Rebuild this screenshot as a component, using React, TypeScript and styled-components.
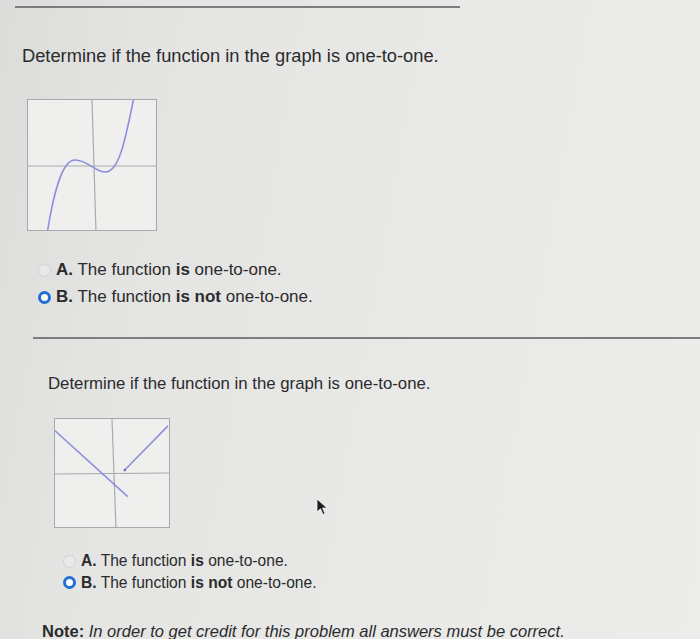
import React from 'react';
import styled, { createGlobalStyle } from 'styled-components';

const GlobalStyle = createGlobalStyle`
    html, body {
        margin: 0;
        padding: 0;
        width: 700px;
        height: 639px;
        overflow: hidden;
    }
    body {
        font-family: "Liberation Sans", Arial, sans-serif;
        color: #2b2b2d;
    }
`;

const Page = styled.div`
    position: relative;
    width: 700px;
    height: 639px;
    overflow: hidden;
    background: linear-gradient(100deg, #dcdcdb 0%, #e4e4e2 20%, #e9e9e7 60%, #ececea 100%);
    display: flex;
    flex-direction: column;
`;

const Rule = styled.div<{ $left: number; $width?: string; $top: number }>`
    margin-top: ${({ $top }) => $top}px;
    margin-left: ${({ $left }) => $left}px;
    width: ${({ $width }) => $width || 'auto'};
    height: 2px;
    background: #7d7d7f;
    flex-shrink: 0;
`;

const Section = styled.section<{ $indent: number; $top: number }>`
    display: flex;
    flex-direction: column;
    padding-left: ${({ $indent }) => $indent}px;
    margin-top: ${({ $top }) => $top}px;
`;

const Prompt = styled.p<{ $size: number }>`
    margin: 0;
    font-size: ${({ $size }) => $size}px;
    line-height: 1.2;
    color: #2b2b2d;
`;

const GraphBox = styled.div<{ $w: number; $h: number; $left: number; $top: number }>`
    margin-left: ${({ $left }) => $left}px;
    margin-top: ${({ $top }) => $top}px;
    width: ${({ $w }) => $w}px;
    height: ${({ $h }) => $h}px;
    background: #efefee;
    border: 1.5px solid #a9a9ab;
    box-sizing: border-box;
    svg {
        display: block;
        width: 100%;
        height: 100%;
    }
`;

const Options = styled.div<{ $left: number; $top: number; $gap: number }>`
    display: flex;
    flex-direction: column;
    gap: ${({ $gap }) => $gap}px;
    margin-left: ${({ $left }) => $left}px;
    margin-top: ${({ $top }) => $top}px;
`;

const Option = styled.label<{ $size: number }>`
    display: flex;
    align-items: center;
    gap: 5px;
    font-size: ${({ $size }) => $size}px;
    line-height: 1.2;
    color: #2b2b2d;
    b {
        font-weight: 700;
    }
`;

const Radio = styled.span<{ $checked?: boolean }>`
    width: 13px;
    height: 13px;
    border-radius: 50%;
    box-sizing: border-box;
    flex-shrink: 0;
    background: ${({ $checked }) => ($checked ? '#ffffff' : '#e8e8e8')};
    border: ${({ $checked }) => ($checked ? '3.5px solid #1f6fd6' : '1px solid #d2d2d2')};
`;

const Note = styled.p`
    margin: 0;
    margin-left: 42px;
    margin-top: 30px;
    font-size: 16.5px;
    line-height: 1.2;
    white-space: nowrap;
    color: #2b2b2d;
    i {
        font-style: italic;
    }
`;

const Cursor = styled.svg`
    position: absolute;
    left: 316px;
    top: 498px;
    width: 14px;
    height: 18px;
`;

const GraphOne = () => (
    <GraphBox $w={130} $h={132} $left={5} $top={32}>
        <svg viewBox="0 0 130 132">
            <line x1="65" y1="0" x2="69" y2="132" stroke="#a9a9ab" strokeWidth="1.2" />
            <line x1="0" y1="67" x2="130" y2="67" stroke="#a9a9ab" strokeWidth="1.2" />
            <path
                d="M20 132 C 26 96, 34 62, 47 61 C 60 60, 70 75, 80 73 C 92 71, 98 45, 107 0"
                fill="none"
                stroke="#8b8fdc"
                strokeWidth="1.6"
            />
        </svg>
    </GraphBox>
);

const GraphTwo = () => (
    <GraphBox $w={116} $h={110} $left={6} $top={24}>
        <svg viewBox="0 0 116 110">
            <line x1="58" y1="0" x2="62" y2="110" stroke="#a9a9ab" strokeWidth="1.2" />
            <line x1="0" y1="56" x2="116" y2="55" stroke="#a9a9ab" strokeWidth="1.2" />
            <line x1="0" y1="12" x2="74" y2="79" stroke="#8b8fdc" strokeWidth="1.6" />
            <line x1="71" y1="52" x2="115" y2="7" stroke="#8b8fdc" strokeWidth="1.6" />
            <circle cx="71" cy="52" r="1.4" fill="#6c70c0" />
        </svg>
    </GraphBox>
);

const App: React.FC = () => {
    return (
        <>
            <GlobalStyle />
            <Page>
                <Rule $top={6} $left={15} $width="445px" />
                <Section $indent={22} $top={37}>
                    <Prompt $size={18.3}>Determine if the function in the graph is one-to-one.</Prompt>
                    <GraphOne />
                    <Options $left={16} $top={29} $gap={7}>
                        <Option $size={17}>
                            <Radio />
                            <span><b>A.</b> The function <b>is</b> one-to-one.</span>
                        </Option>
                        <Option $size={17}>
                            <Radio $checked />
                            <span><b>B.</b> The function <b>is not</b> one-to-one.</span>
                        </Option>
                    </Options>
                </Section>
                <Rule $top={29} $left={33} />
                <Section $indent={48} $top={35}>
                    <Prompt $size={16.8}>Determine if the function in the graph is one-to-one.</Prompt>
                    <GraphTwo />
                    <Options $left={15} $top={24} $gap={3}>
                        <Option $size={15.6}>
                            <Radio />
                            <span><b>A.</b> The function <b>is</b> one-to-one.</span>
                        </Option>
                        <Option $size={15.6}>
                            <Radio $checked />
                            <span><b>B.</b> The function <b>is not</b> one-to-one.</span>
                        </Option>
                    </Options>
                </Section>
                <Note>
                    <b>Note:</b> <i>In order to get credit for this problem all answers must be correct.</i>
                </Note>
                <Cursor viewBox="0 0 14 18">
                    <path d="M1 1 L1 14 L4.5 10.8 L7 16.5 L9 15.6 L6.6 10 L11 10 Z" fill="#1e1e1e" stroke="#f2f2f2" strokeWidth="0.8" />
                </Cursor>
            </Page>
        </>
    );
};

export default App;
